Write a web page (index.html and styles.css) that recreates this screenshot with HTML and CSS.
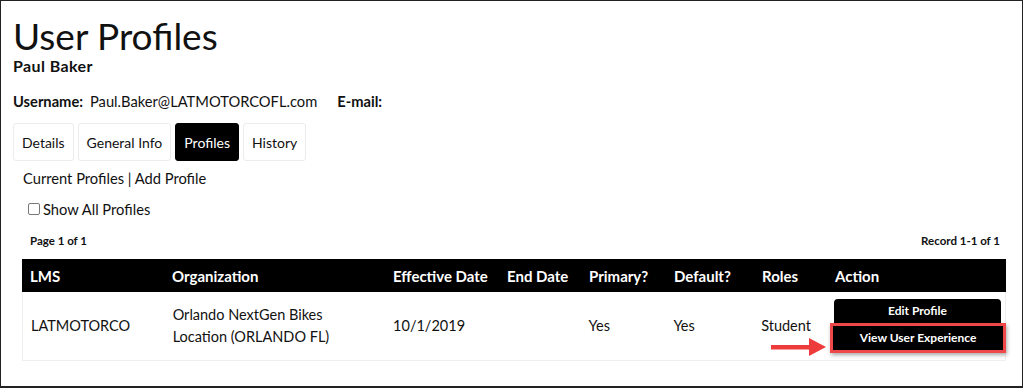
FILE: index.html
```html
<!DOCTYPE html>
<html>
<head>
<meta charset="utf-8">
<link rel="stylesheet" href="styles.css">
</head>
<body>
<div class="frame">
  <h1 class="title">User Profiles</h1>
  <div class="name">Paul Baker</div>
  <div class="userline">
    <span class="lbl">Username:</span>
    <span class="val">Paul.Baker@LATMOTORCOFL.com</span>
    <span class="lbl email">E-mail:</span>
  </div>
  <div class="tabs">
    <div class="tab">Details</div>
    <div class="tab">General Info</div>
    <div class="tab active">Profiles</div>
    <div class="tab">History</div>
  </div>
  <div class="links">Current Profiles | Add Profile</div>
  <label class="check"><span class="box"></span>Show All Profiles</label>
  <div class="pager">
    <span>Page 1 of 1</span>
    <span>Record 1-1 of 1</span>
  </div>
  <div class="table">
    <div class="row head">
      <div class="c c1">LMS</div>
      <div class="c c2">Organization</div>
      <div class="c c3">Effective Date</div>
      <div class="c c4">End Date</div>
      <div class="c c5">Primary?</div>
      <div class="c c6">Default?</div>
      <div class="c c7">Roles</div>
      <div class="c c8">Action</div>
    </div>
    <div class="row body">
      <div class="c c1">LATMOTORCO</div>
      <div class="c c2">Orlando NextGen Bikes<br>Location (ORLANDO FL)</div>
      <div class="c c3">10/1/2019</div>
      <div class="c c4"></div>
      <div class="c c5">Yes</div>
      <div class="c c6">Yes</div>
      <div class="c c7">Student</div>
      <div class="c c8 actions">
        <div class="btn edit">Edit Profile</div>
        <div class="btn view">View User Experience</div>
        <svg class="arrow" width="56" height="20" viewBox="0 0 56 20"><rect x="0" y="8" width="40" height="4.5" fill="#ee3b3b"/><polygon points="38,1 55,10 38,19" fill="#ee3b3b"/></svg>
      </div>
    </div>
  </div>
</div>
</body>
</html>
```

FILE: styles.css
```css
* { box-sizing: border-box; }
html, body { margin: 0; padding: 0; background: #fff; }
body {
  font-family: Lato, "Noto Sans", sans-serif;
  color: #111;
}
.frame {
  width: 1023px;
  height: 388px;
  border: 1px solid #222;
  border-bottom-width: 2px;
  padding: 13px 0 0 12px;
  overflow: hidden;
}
.title {
  margin: 0;
  font-size: 37px;
  font-weight: 400;
  line-height: 44px;
}
.name {
  font-weight: 700;
  font-size: 16px;
  letter-spacing: 0.4px;
  line-height: 16px;
}
.userline {
  margin-top: 18px;
  font-size: 14.7px;
  line-height: 18px;
  display: flex;
  gap: 7px;
}
.lbl { font-weight: 700; }
.email { margin-left: 13px; }
.tabs {
  display: flex;
  gap: 4px;
  margin-top: 13px;
}
.tab {
  height: 38px;
  padding: 0 8px;
  display: flex;
  align-items: center;
  font-size: 14px;
  border: 1px solid #ececec;
  border-radius: 3px;
}
.tab.active { background: #000; color: #fff; border-color: #000; }
.links {
  margin: 8px 0 0 10px;
  font-size: 14.7px;
  line-height: 18px;
}
.check {
  display: flex;
  align-items: center;
  gap: 3px;
  margin: 13px 0 0 15px;
  font-size: 14.7px;
  line-height: 18px;
}
.box {
  width: 12px;
  height: 12px;
  border: 1px solid #777;
  border-radius: 2px;
  display: inline-block;
}
.pager {
  display: flex;
  justify-content: space-between;
  width: 970px;
  margin: 16px 0 0 17px;
  font-size: 11.5px;
  font-weight: 700;
  line-height: 14px;
}
.table {
  width: 984px;
  margin: 11px 0 0 9px;
}
.row { display: flex; }
.row.head {
  background: #000;
  color: #fff;
  font-weight: 700;
  height: 33px;
  align-items: center;
  font-size: 15px;
}
.row.body {
  height: 69px;
  align-items: center;
  font-size: 14.5px;
  line-height: 22px;
  border: 1px solid #eee;
  border-top: none;
}
.c { padding-left: 8px; }
.c1 { width: 142px; }
.c2 { width: 221px; }
.c3 { width: 114px; }
.c4 { width: 82px; }
.c5 { width: 85px; }
.c6 { width: 88px; }
.c7 { width: 73px; }
.c8 { width: 179px; }
.actions {
  position: relative;
  display: flex;
  flex-direction: column;
  align-items: flex-start;
  padding-left: 4px;
}
.btn {
  background: #000;
  color: #fff;
  font-weight: 700;
  font-size: 12px;
  text-align: center;
}
.edit {
  width: 167px;
  height: 26px;
  line-height: 24px;
  border-radius: 4px 4px 0 0;
  margin-left: 4px;
}
.view {
  width: 176px;
  height: 30px;
  line-height: 24px;
  margin-top: -2px;
  border: 3px solid #f04848;
  box-shadow: 1px 2px 4px rgba(0,0,0,0.35);
}
.arrow {
  position: absolute;
  left: -55px;
  top: 38px;
}
```
